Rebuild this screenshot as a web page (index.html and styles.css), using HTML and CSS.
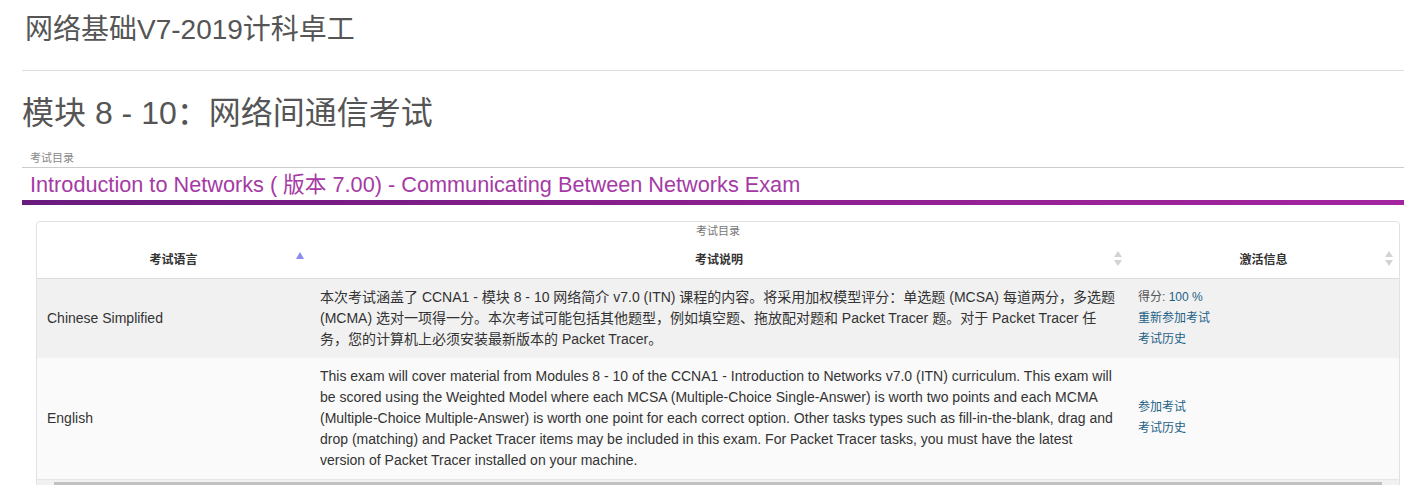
FILE: index.html
```html
<!DOCTYPE html>
<html lang="zh-CN">
<head>
<meta charset="utf-8">
<title>网络基础V7-2019计科卓工</title>
<link rel="stylesheet" href="styles.css">
</head>
<body>
<div class="page">
  <h1 class="course-title">网络基础V7-2019计科卓工</h1>
  <hr class="rule">
  <h2 class="module-title">模块 8 - 10：网络间通信考试</h2>
  <div class="catalog-label">考试目录</div>
  <div class="catalog-name">Introduction to Networks ( 版本 7.00) - Communicating Between Networks Exam</div>
  <div class="purple-bar"></div>

  <div class="table-box">
    <div class="caption">考试目录</div>
    <table class="exam-table">
      <thead>
        <tr>
          <th class="col-lang"><span>考试语言</span><i class="sort-up"></i></th>
          <th class="col-desc"><span>考试说明</span><i class="sort-both"></i></th>
          <th class="col-act"><span>激活信息</span><i class="sort-both"></i></th>
        </tr>
      </thead>
      <tbody>
        <tr class="row-odd">
          <td class="col-lang">Chinese Simplified</td>
          <td class="col-desc">本次考试涵盖了 CCNA1 - 模块 8 - 10 网络简介 v7.0 (ITN) 课程的内容。将采用加权模型评分：单选题 (MCSA) 每道两分，多选题 (MCMA) 选对一项得一分。本次考试可能包括其他题型，例如填空题、拖放配对题和 Packet Tracer 题。对于 Packet Tracer 任务，您的计算机上必须安装最新版本的 Packet Tracer。</td>
          <td class="col-act">
            <div class="act-line">得分: <span class="score">100 %</span></div>
            <div class="act-line"><a class="link">重新参加考试</a></div>
            <div class="act-line"><a class="link">考试历史</a></div>
          </td>
        </tr>
        <tr class="row-even">
          <td class="col-lang">English</td>
          <td class="col-desc">This exam will cover material from Modules 8 - 10 of the CCNA1 - Introduction to Networks v7.0 (ITN) curriculum. This exam will be scored using the Weighted Model where each MCSA (Multiple-Choice Single-Answer) is worth two points and each MCMA (Multiple-Choice Multiple-Answer) is worth one point for each correct option. Other tasks types such as fill-in-the-blank, drag and drop (matching) and Packet Tracer items may be included in this exam. For Packet Tracer tasks, you must have the latest version of Packet Tracer installed on your machine.</td>
          <td class="col-act">
            <div class="act-line"><a class="link">参加考试</a></div>
            <div class="act-line"><a class="link">考试历史</a></div>
          </td>
        </tr>
      </tbody>
    </table>
    <div class="scroll-track"><div class="scroll-thumb"></div></div>
  </div>
</div>
</body>
</html>
```

FILE: styles.css
```css
* { box-sizing: border-box; }
html, body { margin: 0; padding: 0; background: #fff; }
body {
  font-family: "Liberation Sans", Arial, "Noto Sans CJK SC", sans-serif;
  color: #333;
  overflow: hidden;
}
.page {
  padding-left: 22px;
}
.course-title {
  margin: 10px 0 0 3px;
  font-size: 28px;
  line-height: 40px;
  font-weight: normal;
  color: #555;
}
.rule {
  margin: 20px 0 0 0;
  border: 0;
  border-top: 1px solid #ddd;
  height: 0;
}
.module-title {
  margin: 20px 0 0 0;
  font-size: 32px;
  line-height: 44px;
  font-weight: normal;
  color: #555;
}
.catalog-label {
  margin: 16px 0 0 8px;
  font-size: 11px;
  line-height: 14px;
  color: #888;
}
.catalog-name {
  border-top: 1px solid #ccc;
  margin-top: 2px;
  padding: 2px 0 0 8px;
  font-family: "Liberation Sans", Arial, "Noto Sans CJK SC", sans-serif;
  font-size: 21.7px;
  line-height: 30px;
  color: #a53aa5;
  height: 33px;
}
.purple-bar {
  height: 5px;
  background: linear-gradient(90deg, #6a1b7d 0%, #8a1f8e 50%, #a3249f 100%);
}
.table-box {
  margin: 16px 4px 0 14px;
  border: 1px solid #e2e2e2;
  border-radius: 4px;
  overflow: hidden;
}
.caption {
  text-align: center;
  font-size: 11px;
  line-height: 18px;
  color: #777;
}
.exam-table {
  width: 100%;
  border-collapse: collapse;
  table-layout: fixed;
}
.exam-table th {
  position: relative;
  height: 38px;
  font-size: 12px;
  font-weight: bold;
  color: #333;
  text-align: center;
  border-bottom: 1px solid #ddd;
  padding: 0;
}
.exam-table th span { position: relative; top: 0; }
.col-lang { width: 273px; }
.col-desc { width: 818px; }
.col-act { width: auto; }
.exam-table td {
  vertical-align: middle;
  padding: 8px 10px;
  font-size: 14px;
  line-height: 21px;
}
.exam-table td.col-act { font-size: 12px; }
.row-odd { background: #f1f1f1; }
.row-even { background: #fafafa; }
.act-line { line-height: 21px; color: #555; }
.score, .link { color: #1d5f86; text-decoration: none; }
.sort-up {
  position: absolute;
  right: 6px;
  top: 12px;
  width: 0; height: 0;
  border-left: 4px solid transparent;
  border-right: 4px solid transparent;
  border-bottom: 7px solid #8a8cf2;
}
.sort-both {
  position: absolute;
  right: 6px;
  top: 11px;
  width: 8px; height: 15px;
}
.sort-both::before, .sort-both::after {
  content: "";
  position: absolute;
  left: 0;
  width: 0; height: 0;
  border-left: 4px solid transparent;
  border-right: 4px solid transparent;
}
.sort-both::before { top: 0; border-bottom: 6px solid #d3d3d3; }
.sort-both::after { bottom: 0; border-top: 6px solid #d3d3d3; }
.scroll-track {
  border-top: 1px solid #e6e6e6;
  background: #f1f1f1;
  height: 12px;
  padding: 2px 17px 0 17px;
}
.scroll-thumb {
  height: 8px;
  background: #c1c1c1;
}
```
